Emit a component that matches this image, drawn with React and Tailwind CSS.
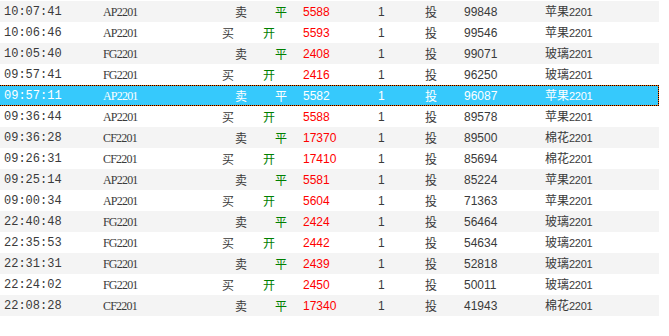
import React from 'react';

const trades = [
  ['10:07:41', 'AP2201', '卖', '平', '5588', '99848', '苹果2201'],
  ['10:06:46', 'AP2201', '买', '开', '5593', '99546', '苹果2201'],
  ['10:05:40', 'FG2201', '卖', '平', '2408', '99071', '玻璃2201'],
  ['09:57:41', 'FG2201', '买', '开', '2416', '96250', '玻璃2201'],
  ['09:57:11', 'AP2201', '卖', '平', '5582', '96087', '苹果2201'],
  ['09:36:44', 'AP2201', '买', '开', '5588', '89578', '苹果2201'],
  ['09:36:28', 'CF2201', '卖', '平', '17370', '89500', '棉花2201'],
  ['09:26:31', 'CF2201', '买', '开', '17410', '85694', '棉花2201'],
  ['09:25:14', 'AP2201', '卖', '平', '5581', '85224', '苹果2201'],
  ['09:00:34', 'AP2201', '买', '开', '5604', '71363', '苹果2201'],
  ['22:40:48', 'FG2201', '卖', '平', '2424', '56464', '玻璃2201'],
  ['22:35:53', 'FG2201', '买', '开', '2442', '54634', '玻璃2201'],
  ['22:31:31', 'FG2201', '卖', '平', '2439', '52818', '玻璃2201'],
  ['22:24:02', 'FG2201', '买', '开', '2450', '50011', '玻璃2201'],
  ['22:08:28', 'CF2201', '卖', '平', '17340', '41943', '棉花2201'],
];

const SELECTED = 4;

const cjk = "font-['Noto_Sans_CJK_SC',sans-serif]";
const num = "font-['Liberation_Sans','Noto_Sans_CJK_SC',sans-serif]";

const Cells = ({ row, selected }) => {
  const [time, code, side, offset, price, serial, name] = row;
  const sell = side === '卖';
  const cn = name.slice(0, 2);
  const contract = name.slice(2);
  return (
    <>
      <div className="w-[103px] pl-[4px] font-['Liberation_Mono',monospace] text-[12px]">{time}</div>
      <div className="w-[119px] font-['Liberation_Serif',serif] text-[12px] tracking-[-0.8px]">{code}</div>
      <div className={`w-[41px] ${cjk} text-[12px] ${sell ? 'pl-[13px]' : ''}`}>{side}</div>
      <div
        className={`w-[40px] ${cjk} text-[12px] ${sell ? 'pl-[12px]' : ''} ${selected ? '' : 'text-[#008000]'}`}
      >
        {offset}
      </div>
      <div className={`w-[75px] ${num} text-[12px] ${selected ? '' : 'text-[#ff0000]'}`}>{price}</div>
      <div className={`w-[47px] ${num} text-[12px]`}>1</div>
      <div className={`w-[39px] ${cjk} text-[12px]`}>投</div>
      <div className={`w-[81px] ${num} text-[12px]`}>{serial}</div>
      <div className="flex items-baseline">
        <span className={`${cjk} text-[12px]`}>{cn}</span>
        <span className={`${num} text-[11px] tracking-[-0.3px]`}>{contract}</span>
      </div>
    </>
  );
};

export default function App() {
  return (
    <div className="w-[669px] h-[336px] bg-white pt-px">
      <div className="w-[659px]">
        {trades.map((row, i) =>
          i === SELECTED ? (
            <div
              key={i}
              className="h-[21px] border border-dotted border-black bg-[#ff6a00]"
            >
              <div className="h-full flex items-center bg-[#36c9fc] text-white -ml-px leading-none">
                <Cells row={row} selected />
              </div>
            </div>
          ) : (
            <div
              key={i}
              className={`h-[21px] flex items-center leading-none text-[#3a3a3a] ${i % 2 === 0 ? 'bg-[#f4f4f4]' : 'bg-white'}`}
            >
              <Cells row={row} />
            </div>
          )
        )}
      </div>
    </div>
  );
}
